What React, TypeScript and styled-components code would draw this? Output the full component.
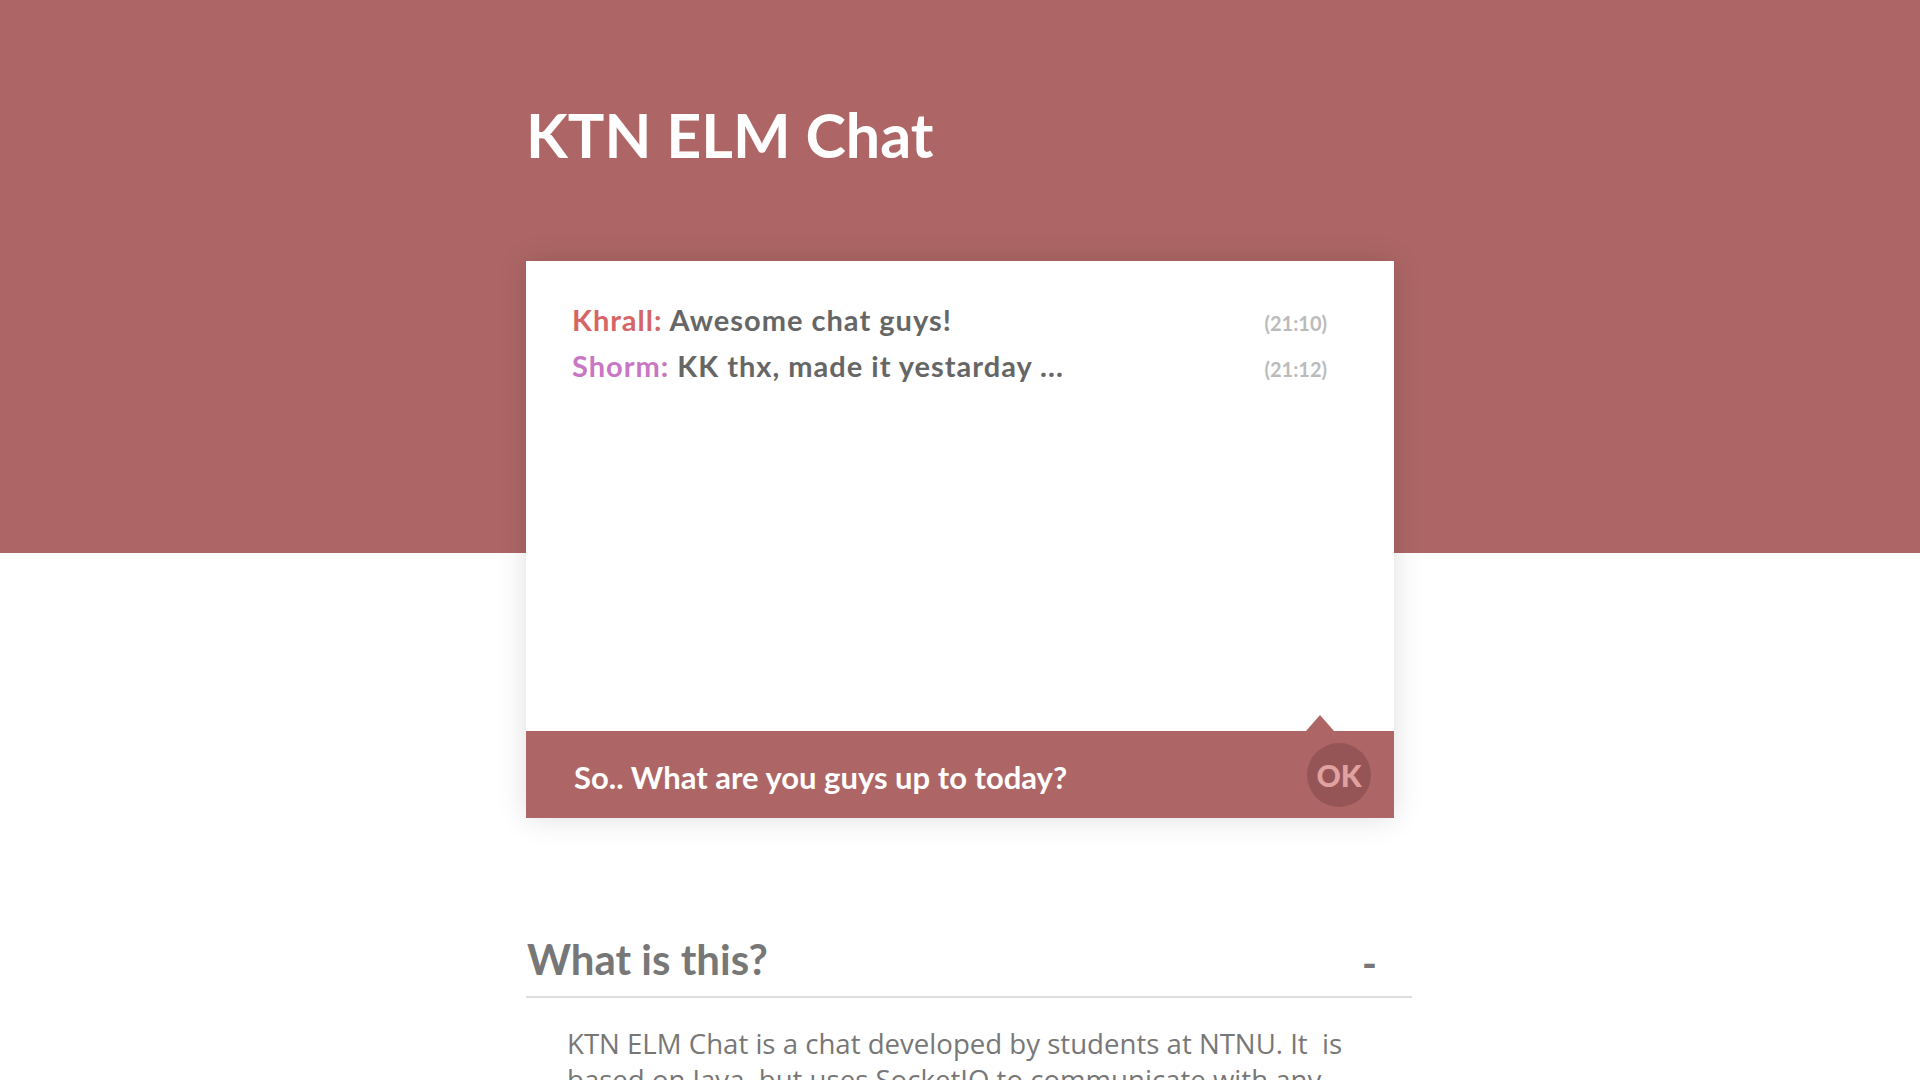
import styled, { createGlobalStyle } from "styled-components";

const GlobalStyle = createGlobalStyle`
  body {
    margin: 0;
    font-family: "Open Sans", "Liberation Sans", sans-serif;
  }
`

type Message = {
    user: string
    color: string
    text: string
    time: string
}

const messages: Message[] = [
    { user: 'Khrall', color: '#d66565', text: 'Awesome chat guys!', time: '21:10' },
    { user: 'Shorm', color: '#c977c5', text: 'KK thx, made it yestarday ...', time: '21:12' },
]

export default function App() {
    return (
        <>
            <GlobalStyle/>
            <Page>
                <Container>
                    <Title>KTN ELM Chat</Title>
                    <Card>
                        <MessageList>
                            {messages.map(m => (
                                <MessageRow key={m.time}>
                                    <Line>
                                        <User color={m.color}>{m.user}:</User> {m.text}
                                    </Line>
                                    <Time>({m.time})</Time>
                                </MessageRow>
                            ))}
                        </MessageList>
                        <InputBar>
                            <Arrow/>
                            <Input defaultValue="So.. What are you guys up to today?"/>
                            <OkButton>OK</OkButton>
                        </InputBar>
                    </Card>
                    <Section>
                        <SectionHeader>
                            <SectionTitle>What is this?</SectionTitle>
                            <Toggle>-</Toggle>
                        </SectionHeader>
                        <Paragraph>
                            KTN ELM Chat is a chat developed by students at NTNU. It &nbsp;is
                            based on Java, but uses SocketIO to communicate with any browser.
                            The server keeps track of everyone who is logged in.
                        </Paragraph>
                    </Section>
                </Container>
            </Page>
        </>
    )
}

const Page = styled.div`
  min-height: 100vh;
  background: linear-gradient(#ad6665 0, #ad6665 553px, #fff 553px);
  padding-top: 97px;
  box-sizing: border-box;
  overflow: hidden;
`

const Container = styled.div`
  width: 868px;
  margin: 0 auto;
`

const Title = styled.h1`
  margin: 0;
  font-family: Lato, "Open Sans", sans-serif;
  font-weight: 700;
  font-size: 61px;
  line-height: 75px;
  color: #fff;
`

const Card = styled.div`
  margin-top: 89px;
  background: #fff;
  box-shadow: 0 0 28px rgba(0, 0, 0, 0.13);
  display: flex;
  flex-direction: column;
`

const MessageList = styled.div`
  height: 470px;
  box-sizing: border-box;
  padding: 36px 67px 0 46px;
`

const MessageRow = styled.div`
  display: flex;
  justify-content: space-between;
  align-items: baseline;
  height: 46px;
  line-height: 46px;
`

const Line = styled.div`
  font-family: Lato, "Open Sans", sans-serif;
  font-weight: 700;
  font-size: 29px;
  letter-spacing: 1px;
  color: #666;
`

const User = styled.span<{ color: string }>`
  color: ${props => props.color};
`

const Time = styled.span`
  font-family: Lato, "Open Sans", sans-serif;
  font-weight: 700;
  font-size: 20px;
  line-height: 1;
  color: #bbb;
`

const InputBar = styled.div`
  position: relative;
  height: 87px;
  background: #ad6665;
  display: flex;
  align-items: center;
  padding: 4px 23px 0 48px;
  box-sizing: border-box;
`

const Arrow = styled.div`
  position: absolute;
  left: 780px;
  top: -16px;
  width: 0;
  height: 0;
  border-left: 14px solid transparent;
  border-right: 14px solid transparent;
  border-bottom: 16px solid #ad6665;
`

const Input = styled.input`
  flex: 1;
  border: none;
  outline: none;
  background: transparent;
  padding: 0;
  font-family: Lato, "Open Sans", sans-serif;
  font-weight: 700;
  font-size: 31px;
  color: #fff;
`

const OkButton = styled.button`
  width: 64px;
  height: 64px;
  margin-top: -4px;
  border: none;
  border-radius: 50%;
  background: #955556;
  color: #e0a1a1;
  font-family: Lato, "Open Sans", sans-serif;
  font-weight: 900;
  font-size: 30px;
  padding: 0;
  cursor: pointer;
`

const Section = styled.div`
  margin-top: 117px;
  width: 886px;
`

const SectionHeader = styled.div`
  display: flex;
  justify-content: space-between;
  align-items: center;
  height: 63px;
  padding: 0 35px 0 1px;
  box-sizing: border-box;
  border-bottom: 2px solid #ddd;
`

const SectionTitle = styled.h2`
  margin: 0 0 12px;
  font-family: Lato, "Open Sans", sans-serif;
  font-weight: 700;
  font-size: 42px;
  line-height: 49px;
  color: #777;
`

const Toggle = styled.span`
  margin-bottom: 6px;
  font-family: Lato, "Open Sans", sans-serif;
  font-weight: 700;
  font-size: 40px;
  line-height: 40px;
  color: #777;
`

const Paragraph = styled.p`
  margin: 27px 0 0 41px;
  width: 810px;
  font-size: 27.6px;
  line-height: 36px;
  color: #777;
`
